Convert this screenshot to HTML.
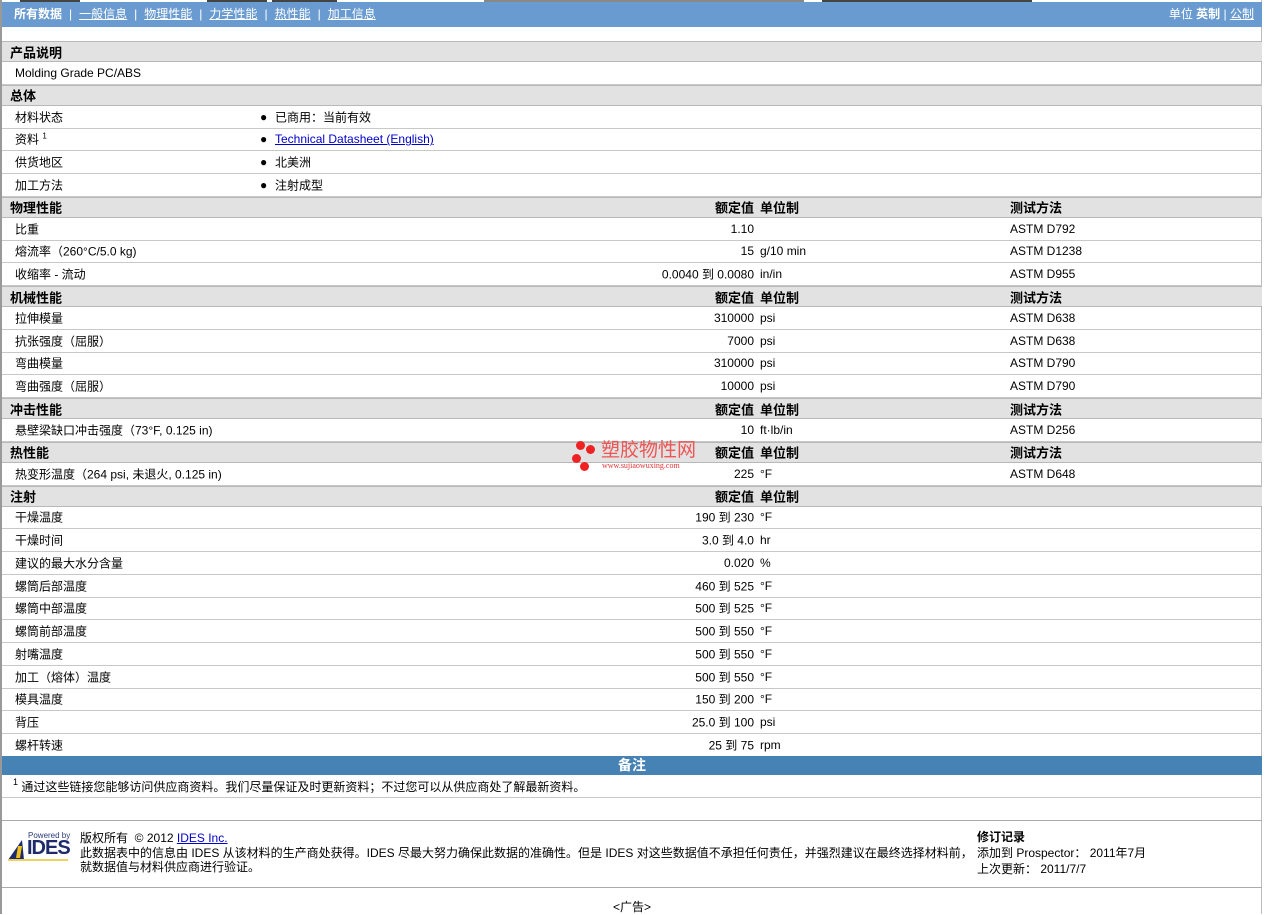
<!DOCTYPE html>
<html><head><meta charset="utf-8"><style>
*{margin:0;padding:0;box-sizing:border-box}
body{width:1268px;height:914px;background:#fff;font-family:"Liberation Sans","Noto Sans CJK SC",sans-serif;font-size:12px;color:#000;position:relative;overflow:hidden}
.wrap{position:absolute;left:0;top:0;width:1262px;height:914px;border-left:2px solid #999;border-right:1px solid #bbb}
.tabs{position:absolute;top:0;left:0;height:2px;width:100%}
.tabs span{position:absolute;top:0;height:2px;background:#444}
.bar{position:absolute;top:2px;left:0;width:1260px;height:25px;background:#6a9bd0;color:#fff;font-size:12px;line-height:24px}
.bar a{color:#fff;text-decoration:underline}
.bar .sep{margin:0 7px}
.r{position:absolute;left:0;width:1260px;border-bottom:1px solid #c8c8c8}
.h{background:#e2e2e2;border-top:1px solid #b8b8b8;border-bottom:1px solid #b8b8b8;font-weight:bold;font-size:13px}
.r span{position:absolute;top:50%;transform:translateY(-50%);white-space:nowrap}
.lab{left:13px}.hl{left:8px}
.val{right:508px;text-align:right}
.unit{left:758px}.tm{left:1008px}
.bul{left:258px}.bt{left:273px}
a{color:#00c}
</style></head><body>
<div class="wrap">
<div class="tabs"><span style="left:18px;width:60px"></span><span style="left:205px;width:60px"></span><span style="left:270px;width:65px"></span><span style="left:482px;width:320px;background:#888"></span><span style="left:820px;width:210px"></span></div>
<div class="bar"><span style="position:absolute;left:12px"><b>所有数据</b><span class="sep">|</span><a>一般信息</a><span class="sep">|</span><a>物理性能</a><span class="sep">|</span><a>力学性能</a><span class="sep">|</span><a>热性能</a><span class="sep">|</span><a>加工信息</a></span><span style="position:absolute;right:8px">单位 <b>英制</b> | <a>公制</a></span></div>
<div id="rows"></div>
<div style="position:absolute;top:756px;left:0;width:1260px;height:19px;background:#4682b4;color:#fff;font-weight:bold;font-size:14px;text-align:center;line-height:19px">备注</div>
<div class="r" style="top:775px;height:23px"><span class="lab" style="left:11px"><sup style="font-size:9px;vertical-align:6px">1</sup> 通过这些链接您能够访问供应商资料。我们尽量保证及时更新资料；不过您可以从供应商处了解最新资料。</span></div>
<div class="r" style="top:798px;height:23px;border-bottom:1px solid #aaa"></div>
<div style="position:absolute;top:832px;left:6px;width:64px;height:30px">
<div style="font-size:8px;color:#2a3a7a;position:absolute;left:20px;top:-1px;white-space:nowrap">Powered by</div>
<svg width="20" height="22" style="position:absolute;left:0;top:6px"><polygon points="0,22 14,2 16,22" fill="#1e2b6b"/><polygon points="10,8 14,8 12,20 8,20" fill="#f0c020"/></svg>
<div style="position:absolute;left:19px;top:5px;font-size:20px;font-weight:bold;color:#1e2b6b;letter-spacing:-1px">IDES</div>
<div style="position:absolute;left:0;top:27px;width:60px;height:2px;background:#f0d060"></div></div>
<div style="position:absolute;left:78px;top:831px;line-height:14.5px;font-size:12px">版权所有 &nbsp;© 2012 <a style="text-decoration:underline">IDES Inc.</a><br>此数据表中的信息由 IDES 从该材料的生产商处获得。IDES 尽最大努力确保此数据的准确性。但是 IDES 对这些数据值不承担任何责任，并强烈建议在最终选择材料前，<br>就数据值与材料供应商进行验证。</div>
<div style="position:absolute;left:975px;top:829px;line-height:16px"><b>修订记录</b><br>添加到 Prospector： 2011年7月<br>上次更新： 2011/7/7</div>
<div style="position:absolute;top:887px;left:0;width:1260px;border-top:1px solid #aaa"></div>
<div style="position:absolute;top:898px;left:0;width:1260px;text-align:center">&lt;广告&gt;</div>
<div style="position:absolute;left:570px;top:440px;width:130px;height:36px">
<div style="position:absolute;left:4px;top:1px;width:9px;height:9px;border-radius:50%;background:#e22"></div>
<div style="position:absolute;left:14px;top:5px;width:9px;height:9px;border-radius:50%;background:#e22"></div>
<div style="position:absolute;left:0;top:14px;width:9px;height:9px;border-radius:50%;background:#e22"></div>
<div style="position:absolute;left:8px;top:22px;width:9px;height:9px;border-radius:50%;background:#e22"></div>
<div style="position:absolute;left:29px;top:1px;font-size:19px;color:#e55;line-height:20px">塑胶物性网</div>
<div style="position:absolute;left:30px;top:21px;font-size:8px;color:#d33;font-family:'Liberation Serif',serif">www.sujiaowuxing.com</div></div>
</div>
<script>
var R=[
['h','产品说明'],['d','Molding Grade PC/ABS'],['h','总体'],
['b','材料状态','已商用：当前有效'],['b','资料 <sup style="font-size:8px">1</sup>','<a style="text-decoration:underline">Technical Datasheet (English)</a>'],['b','供货地区','北美洲'],['b','加工方法','注射成型'],
['H','物理性能',1],['v','比重','1.10','','ASTM D792'],['v','熔流率（260°C/5.0 kg)','15','g/10 min','ASTM D1238'],['v','收缩率 - 流动','0.0040 到 0.0080','in/in','ASTM D955'],
['H','机械性能',1],['v','拉伸模量','310000','psi','ASTM D638'],['v','抗张强度（屈服）','7000','psi','ASTM D638'],['v','弯曲模量','310000','psi','ASTM D790'],['v','弯曲强度（屈服）','10000','psi','ASTM D790'],
['H','冲击性能',1],['v','悬壁梁缺口冲击强度（73°F, 0.125 in)','10','ft·lb/in','ASTM D256'],
['H','热性能',1],['v','热变形温度（264 psi, 未退火, 0.125 in)','225','°F','ASTM D648'],
['H','注射',0],['v','干燥温度','190 到 230','°F',''],['v','干燥时间','3.0 到 4.0','hr',''],['v','建议的最大水分含量','0.020','%',''],['v','螺筒后部温度','460 到 525','°F',''],['v','螺筒中部温度','500 到 525','°F',''],['v','螺筒前部温度','500 到 550','°F',''],['v','射嘴温度','500 到 550','°F',''],['v','加工（熔体）温度','500 到 550','°F',''],['v','模具温度','150 到 200','°F',''],['v','背压','25.0 到 100','psi',''],['v','螺杆转速','25 到 75','rpm','']
];
var y=41,h='';
R.forEach(function(r){var hh=(r[0]=='h'||r[0]=='H')?21:22.75;var c='';
if(r[0]=='h')c='<span class="hl">'+r[1]+'</span>';
else if(r[0]=='H')c='<span class="hl">'+r[1]+'</span><span class="val">额定值</span><span class="unit">单位制</span>'+(r[2]?'<span class="tm">测试方法</span>':'');
else if(r[0]=='d')c='<span class="lab">'+r[1]+'</span>';
else if(r[0]=='b')c='<span class="lab">'+r[1]+'</span><span class="bul">●</span><span class="bt">'+r[2]+'</span>';
else c='<span class="lab">'+r[1]+'</span><span class="val">'+r[2]+'</span><span class="unit">'+r[3]+'</span><span class="tm">'+r[4]+'</span>';
h+='<div class="r'+(hh==21?' h':'')+'" style="top:'+y+'px;height:'+hh+'px">'+c+'</div>';y+=hh;});
document.getElementById('rows').innerHTML=h;
</script>
</body></html>
